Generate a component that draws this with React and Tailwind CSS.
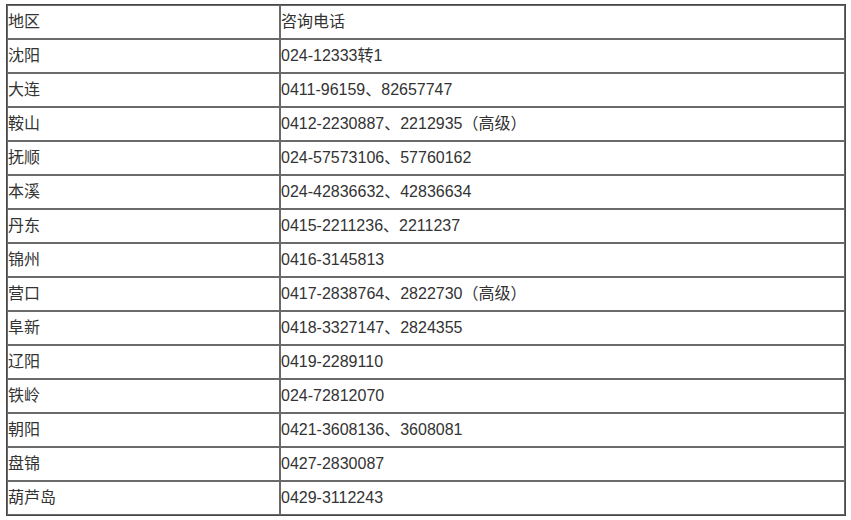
import React from "react";

const rows = [
  ["沈阳", "024-12333转1"],
  ["大连", "0411-96159、82657747"],
  ["鞍山", "0412-2230887、2212935（高级）"],
  ["抚顺", "024-57573106、57760162"],
  ["本溪", "024-42836632、42836634"],
  ["丹东", "0415-2211236、2211237"],
  ["锦州", "0416-3145813"],
  ["营口", "0417-2838764、2822730（高级）"],
  ["阜新", "0418-3327147、2824355"],
  ["辽阳", "0419-2289110"],
  ["铁岭", "024-72812070"],
  ["朝阳", "0421-3608136、3608081"],
  ["盘锦", "0427-2830087"],
  ["葫芦岛", "0429-3112243"],
];

const cell = "h-[34px] border border-[#6a6a6a] p-0 align-middle text-left font-normal";

const App = () => {
  return (
    <div
      className="bg-white w-[851px] h-[520px] pl-[6px] pt-[4px] text-[16px] text-[#333]"
      style={{ fontFamily: '"Liberation Sans", "Noto Sans CJK SC", sans-serif' }}
    >
      <table className="w-[840px] table-fixed border-separate border-spacing-0 border border-[#474747]">
        <colgroup>
          <col className="w-[273px]" />
          <col />
        </colgroup>
        <tbody>
          <tr>
            <td className={cell}>地区</td>
            <td className={cell}>咨询电话</td>
          </tr>
          {rows.map(([city, phone]) => (
            <tr key={city}>
              <td className={cell}>{city}</td>
              <td className={cell}>{phone}</td>
            </tr>
          ))}
        </tbody>
      </table>
    </div>
  );
};

export default App;
